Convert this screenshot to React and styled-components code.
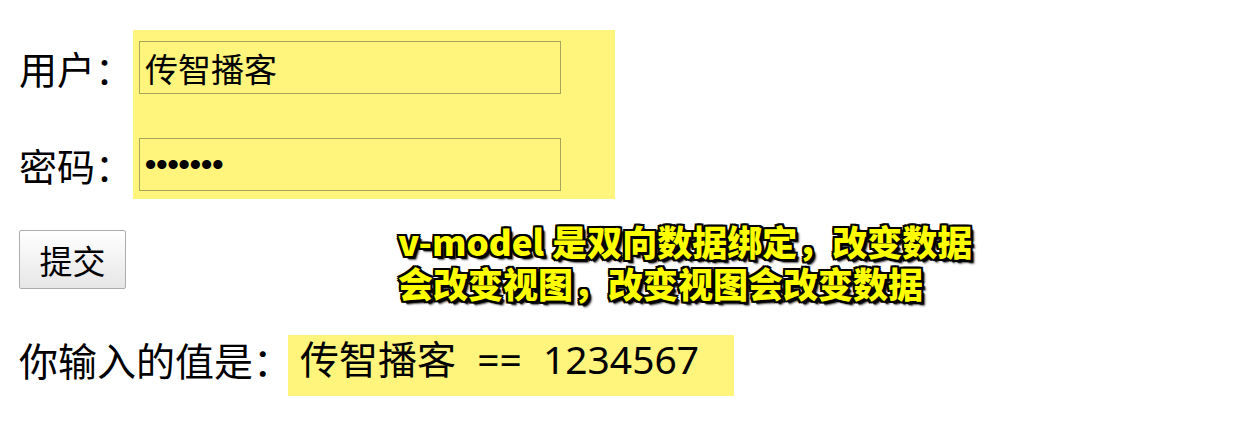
import React from "react"
import styled, { createGlobalStyle } from "styled-components"

const GlobalStyle = createGlobalStyle`
  html, body {
    margin: 0;
    padding: 0;
    background: #ffffff;
  }
  body {
    font-family: "Noto Sans CJK SC", "Microsoft YaHei", sans-serif;
    color: #000000;
  }
`

const Page = styled.div`
  position: relative;
  width: 1235px;
  height: 444px;
  padding: 30px 0 0 19px;
  box-sizing: border-box;
  overflow: hidden;
`

const FormBlock = styled.div`
  display: flex;
  align-items: flex-start;
`

const LabelCol = styled.div`
  width: 114px;
  display: flex;
  flex-direction: column;
  gap: 44px;
  padding-top: 11px;
`

const Label = styled.label`
  height: 53px;
  display: flex;
  align-items: center;
  font-size: 38px;
  white-space: nowrap;
`

const Highlight = styled.div`
  display: flex;
  flex-direction: column;
  gap: 44px;
  padding: 11px 54px 8px 6px;
  background: #fff57c;
`

const Field = styled.input`
  width: 422px;
  height: 53px;
  box-sizing: border-box;
  margin: 0;
  padding: 0 5px;
  border: 1px solid #aba45c;
  background: transparent;
  font-family: ${(p) =>
    p.type === "password"
      ? `"Liberation Sans", sans-serif`
      : `"Noto Sans CJK SC", sans-serif`};
  font-size: ${(p) => (p.type === "password" ? "32px" : "33px")};
  font-weight: ${(p) => (p.type === "password" ? 700 : 400)};
  color: #000;
  outline: none;
`

const SubmitButton = styled.button`
  margin-top: 31px;
  width: 107px;
  height: 59px;
  box-sizing: border-box;
  border: 1px solid #adadad;
  border-radius: 2px;
  background: linear-gradient(#ffffff, #e6e6e6);
  font-family: "Noto Sans CJK SC", sans-serif;
  font-size: 33px;
  color: #000;
  padding: 0;
`

const ResultRow = styled.div`
  display: flex;
  align-items: flex-start;
  margin-top: 46px;
`

const ResultLabel = styled.span`
  width: 269px;
  font-size: 39px;
  line-height: 44px;
  padding-top: 2px;
  white-space: nowrap;
`

const ResultValue = styled.span`
  height: 61px;
  box-sizing: border-box;
  padding: 2px 35px 0 12px;
  background: #fff57c;
  font-family: "Noto Sans", "Noto Sans CJK SC", sans-serif;
  font-size: 39px;
  line-height: 44px;
  word-spacing: 11px;
  white-space: pre;
`

const Note = styled.div`
  position: absolute;
  left: 398px;
  top: 220px;
  font-family: "Noto Sans CJK SC", sans-serif;
  font-weight: 900;
  font-size: 35px;
  line-height: 42px;
  color: #ffff00;
  white-space: nowrap;
  text-shadow:
    -2px -2px 0 #000, 0 -2px 0 #000, 2px -2px 0 #000,
    -2px 0 0 #000, 2px 0 0 #000,
    -2px 2px 0 #000, 0 2px 0 #000, 2px 2px 0 #000,
    3px 3px 1px #000, 4px 4px 2px rgba(0, 0, 0, 0.6);
`

export default function App() {
  return (
    <>
      <GlobalStyle />
      <Page>
        <FormBlock>
          <LabelCol>
            <Label>用户：</Label>
            <Label>密码：</Label>
          </LabelCol>
          <Highlight>
            <Field type="text" defaultValue="传智播客" />
            <Field type="password" defaultValue="1234567" />
          </Highlight>
        </FormBlock>
        <SubmitButton>提交</SubmitButton>
        <ResultRow>
          <ResultLabel>你输入的值是：</ResultLabel>
          <ResultValue>传智播客 == 1234567</ResultValue>
        </ResultRow>
        <Note>
          v-model 是双向数据绑定，改变数据
          <br />
          会改变视图，改变视图会改变数据
        </Note>
      </Page>
    </>
  )
}
